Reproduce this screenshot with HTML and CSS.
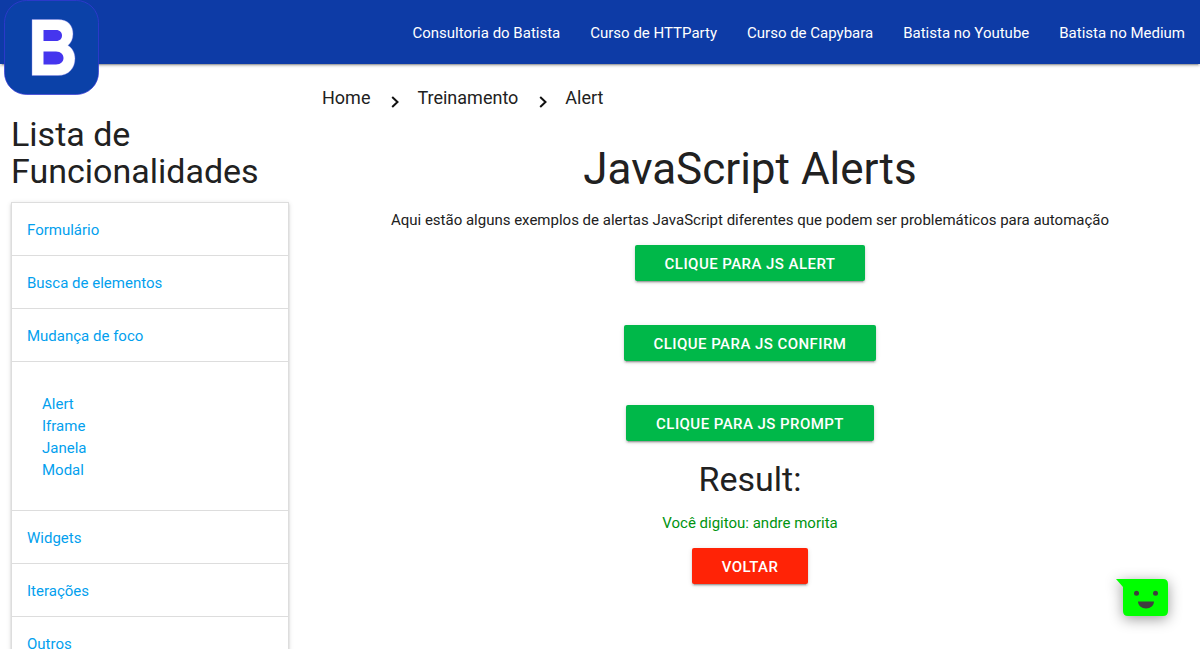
FILE: index.html
```html
<!DOCTYPE html>
<html lang="pt-BR">
<head>
<meta charset="utf-8">
<meta name="viewport" content="width=device-width, initial-scale=1">
<title>JavaScript Alerts</title>
<link rel="stylesheet" href="styles.css">
</head>
<body>
<header class="navbar">
  <a class="brand" href="#" aria-label="Batista">
    <svg class="brand-logo" viewBox="0 0 95 95" aria-hidden="true">
      <rect x="0.5" y="0.5" width="94" height="94" rx="22" fill="#0b41a8" stroke="#3a38d8" stroke-width="0.7"/>
      <path d="M28 19.500H54C64 19.500 69 25.500 69 34C69 39 67 43 64 45.500C68.500 48 71 53 71 58.500C71 68 65 75.500 54 75.500H28Z" fill="#fff" stroke="#8a87ee" stroke-width="0.400"/>
      <path d="M39.500 30H52C56 30 58 32.500 58 35.500C58 38.500 56 41 52 41H39.500ZM39.500 51.500H52C57 51.500 59.500 54.500 59.500 58C59.500 61.500 57 64.500 52 64.500H39.500Z" fill="#4535ee"/>
    </svg>
  </a>
  <nav class="nav-links">
    <a href="#">Consultoria do Batista</a>
    <a href="#">Curso de HTTParty</a>
    <a href="#">Curso de Capybara</a>
    <a href="#">Batista no Youtube</a>
    <a href="#">Batista no Medium</a>
  </nav>
</header>
<div class="layout">
  <aside class="sidebar">
    <h2 class="heading">Lista de Funcionalidades</h2>
    <ul class="menu">
      <li><a class="menu-link" href="#">Formulário</a></li>
      <li><a class="menu-link" href="#">Busca de elementos</a></li>
      <li>
        <a class="menu-link" href="#">Mudança de foco</a>
        <ul class="submenu">
          <li><a href="#">Alert</a></li>
          <li><a href="#">Iframe</a></li>
          <li><a href="#">Janela</a></li>
          <li><a href="#">Modal</a></li>
        </ul>
      </li>
      <li><a class="menu-link" href="#">Widgets</a></li>
      <li><a class="menu-link" href="#">Iterações</a></li>
      <li><a class="menu-link" href="#">Outros</a></li>
    </ul>
  </aside>
  <main class="content">
    <nav class="breadcrumb" aria-label="Navegação">
      <a href="#">Home</a>
      <svg class="chevron" viewBox="0 0 8 12" aria-hidden="true"><path d="M1.200 1L6.500 6L1.200 11"/></svg>
      <a href="#">Treinamento</a>
      <svg class="chevron" viewBox="0 0 8 12" aria-hidden="true"><path d="M1.200 1L6.500 6L1.200 11"/></svg>
      <a href="#">Alert</a>
    </nav>
    <section class="example">
      <h1 class="title">JavaScript Alerts</h1>
      <p class="text">Aqui estão alguns exemplos de alertas JavaScript diferentes que podem ser problemáticos para automação</p>
      <div class="actions">
        <button class="btn" type="button">Clique para JS Alert</button>
        <button class="btn" type="button">Clique para JS Confirm</button>
        <button class="btn" type="button">Clique para JS Prompt</button>
      </div>
      <h2 class="heading result-heading">Result:</h2>
      <p class="text result">Você digitou: andre morita</p>
      <button class="btn btn-back" type="button">Voltar</button>
    </section>
  </main>
</div>
<button class="chat" type="button" aria-label="Abrir chat">
  <svg class="chat-icon" viewBox="0 0 52 37" aria-hidden="true">
    <path d="M0 0H47Q52 0 52 5V32Q52 37 47 37H12Q7 37 7 32V8Z" fill="#0f0"/>
    <circle cx="20.500" cy="14.300" r="2.500" fill="#3f3f3f"/>
    <circle cx="39.500" cy="14.300" r="2.500" fill="#3f3f3f"/>
    <path d="M22 22.500H38C38 26.500 34.500 29.500 30 29.500C25.500 29.500 22 26.500 22 22.500Z" fill="#3f3f3f"/>
  </svg>
</button>
</body>
</html>
```
FILE: styles.css
```css
* {
  box-sizing: border-box;
}

html,
body {
  margin: 0;
}

body {
  background: #fff;
  color: #212121;
  font-family: Roboto, "Liberation Sans", sans-serif;
  font-size: 15px;
  line-height: 22px;
}

html {
  scrollbar-width: none;
}

a {
  color: inherit;
  text-decoration: none;
}

ul {
  list-style: none;
  margin: 0;
  padding: 0;
}

h1,
h2,
p {
  margin: 0;
  font-weight: 400;
}

.navbar {
  display: flex;
  justify-content: space-between;
  height: 64px;
  background: #0d3ba6;
  color: #fff;
  box-shadow: 0 2px 2px rgba(0, 0, 0, 0.14), 0 1px 5px rgba(0, 0, 0, 0.12), 0 3px 1px -2px rgba(0, 0, 0, 0.2);
}

.brand {
  margin-left: 4px;
}

.brand-logo {
  display: block;
  width: 95px;
  height: 95px;
}

.nav-links {
  display: flex;
  align-items: center;
  padding-top: 2px;
}

.nav-links a {
  padding: 0 15px;
}

.layout {
  display: grid;
  grid-template-columns: 1fr 3fr;
}

.sidebar {
  padding: 52px 11px 0;
}

.heading {
  font-size: 34px;
  line-height: 37px;
}

.menu {
  margin-top: 12px;
  border: 1px solid #ddd;
  border-bottom: 0;
  color: #039fee;
  box-shadow: 0 2px 2px rgba(0, 0, 0, 0.14), 0 1px 5px rgba(0, 0, 0, 0.12), 0 3px 1px -2px rgba(0, 0, 0, 0.2);
}

.menu-link {
  display: block;
  padding: 16px 15px 14px;
  border-bottom: 1px solid #ddd;
}

.submenu {
  padding: 31px 30px 29px;
  border-bottom: 1px solid #ddd;
}

.content {
  padding: 23px 11px 0;
}

.breadcrumb {
  display: flex;
  align-items: center;
  padding-left: 11px;
  font-size: 18px;
}

.chevron {
  width: 8px;
  height: 12px;
  margin: 8px 18px 0 21px;
  fill: none;
  stroke: #111;
  stroke-width: 2;
}

.example {
  display: flex;
  flex-direction: column;
  align-items: center;
  padding-top: 36px;
  text-align: center;
}

.title {
  font-size: 44px;
  line-height: 48px;
}

.text {
  margin: 16px 0 14px;
}

.actions {
  display: flex;
  flex-direction: column;
  align-items: center;
  gap: 44px;
}

.btn {
  height: 36px;
  padding: 1px 30px 0;
  border: 0;
  border-radius: 2px;
  background: #00b849;
  color: #fff;
  font: 500 15px/36px Roboto, "Liberation Sans", sans-serif;
  letter-spacing: 0.03em;
  text-transform: uppercase;
  cursor: pointer;
  box-shadow: 0 2px 2px rgba(0, 0, 0, 0.14), 0 1px 5px rgba(0, 0, 0, 0.12), 0 3px 1px -2px rgba(0, 0, 0, 0.2);
}

.result-heading {
  margin-top: 20px;
}

.result {
  margin: 14px 0;
  color: #009410;
}

.btn-back {
  background: #ff2306;
}

.chat {
  position: fixed;
  right: 32px;
  bottom: 33px;
  padding: 0;
  border: 0;
  background: none;
  cursor: pointer;
}

.chat-icon {
  display: block;
  width: 52px;
  height: 37px;
  overflow: visible;
  filter: drop-shadow(0 3px 7px rgba(0, 0, 0, 0.4));
}
```
